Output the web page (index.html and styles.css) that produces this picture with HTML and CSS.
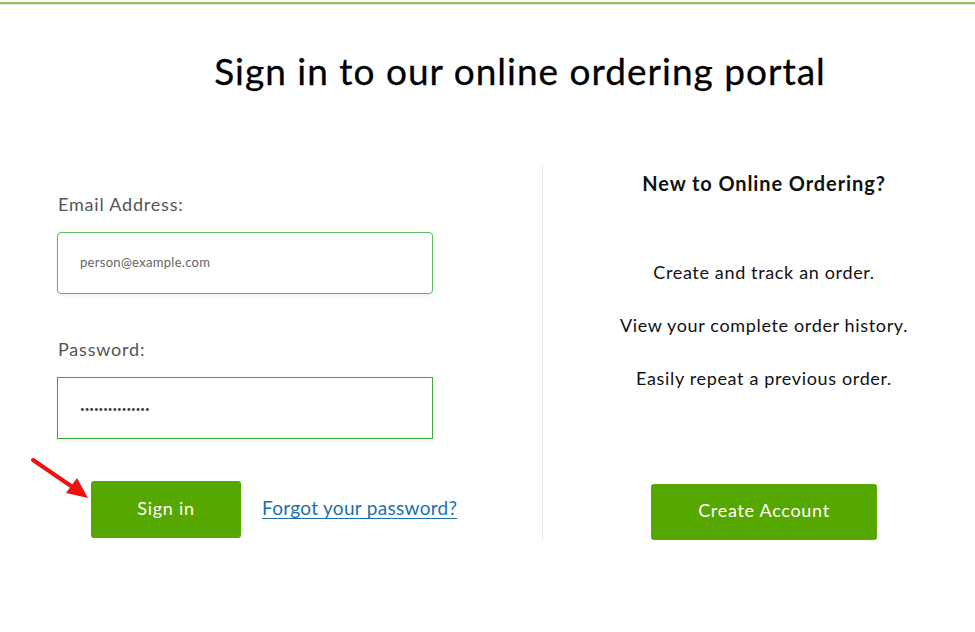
FILE: index.html
```html
<!DOCTYPE html>
<html lang="en">
<head>
<meta charset="utf-8">
<title>Sign in</title>
<link rel="stylesheet" href="styles.css">
</head>
<body>
<div class="topbar"></div>
<h1 class="title">Sign in to our online ordering portal</h1>
<main class="panels">
  <section class="left">
    <label class="label first" for="email">Email Address:</label>
    <input class="field email" id="email" type="text" placeholder="person@example.com">
    <label class="label second" for="pw">Password:</label>
    <input class="field pw" id="pw" type="password" value="123456789012345">
    <div class="actions">
      <button class="btn signin">Sign in</button>
      <a class="forgot" href="#">Forgot your password?</a>
      <svg class="arrow" width="70" height="50" viewBox="0 0 70 50">
        <line x1="5" y1="7" x2="46" y2="35" stroke="#f01010" stroke-width="4" stroke-linecap="round"/>
        <polygon points="60,45 38,40 49,25" fill="#f01010"/>
      </svg>
    </div>
  </section>
  <section class="right">
    <h2 class="newhead">New to Online Ordering?</h2>
    <p class="point p1">Create and track an order.</p>
    <p class="point">View your complete order history.</p>
    <p class="point">Easily repeat a previous order.</p>
    <button class="btn create">Create Account</button>
  </section>
</main>
</body>
</html>
```
FILE: styles.css
```css
html, body {
  margin: 0;
  padding: 0;
  background: #fff;
}
body {
  font-family: Lato, "Open Sans", Arial, sans-serif;
  color: #111;
}
.topbar {
  margin-top: 2px;
  height: 2px;
  background: #8cc25a;
  border-bottom: 1px solid #dfe6d8;
}
.title {
  margin: 0;
  padding: 43px 0 0 65px;
  text-align: center;
  font-size: 37px;
  line-height: 45px;
  font-weight: 400;
  letter-spacing: 1px;
  color: #000;
  -webkit-text-stroke: 0.3px #000;
}
.panels {
  display: flex;
  margin-top: 73px;
}
.left {
  width: 485px;
  padding-left: 57px;
  border-right: 1px solid #e6e6e6;
  display: flex;
  flex-direction: column;
  align-items: flex-start;
  padding-bottom: 2px;
}
.label {
  font-size: 18px;
  line-height: 22px;
  letter-spacing: 0.8px;
  color: #555;
  margin-left: 1px;
}
.label.first { margin-top: 27px; }
.label.second { margin-top: 44px; }
.field {
  box-sizing: border-box;
  width: 376px;
  height: 62px;
  margin: 17px 0 0 0;
  padding: 0 0 0 22px;
  font-family: inherit;
  font-size: 13px;
  letter-spacing: 0.3px;
  color: #555;
  background: #fff;
  outline: none;
  box-shadow: 0 2px 3px rgba(0,0,0,0.06);
}
.field.email {
  border: 1px solid #5fb860;
  border-radius: 4px;
  padding-bottom: 2px;
}
.field.email::placeholder { color: #666; }
.field.pw {
  border: 1px solid #3aa83a;
  border-radius: 0;
  font-size: 8px;
  letter-spacing: 0;
  color: #444;
  padding-top: 2px;
}
.actions {
  position: relative;
  margin-top: 42px;
  margin-left: 34px;
  display: flex;
  align-items: center;
  gap: 21px;
}
.btn {
  border: none;
  border-radius: 3px;
  background: #56a700;
  color: #fff;
  font-family: inherit;
  font-size: 18px;
  letter-spacing: 0.7px;
  padding: 0 0 4px 0;
  cursor: pointer;
}
.signin {
  width: 150px;
  height: 57px;
}
.forgot {
  color: #1b6fae;
  font-size: 19px;
  letter-spacing: 0.3px;
  text-decoration: underline;
  text-underline-offset: 3px;
  margin-bottom: 4px;
}
.arrow {
  position: absolute;
  left: -63px;
  top: -28px;
}
.right {
  flex: 1;
  padding-left: 10px;
  display: flex;
  flex-direction: column;
  align-items: center;
}
.newhead {
  margin: 5px 0 0 0;
  font-size: 20px;
  line-height: 24px;
  font-weight: 700;
  letter-spacing: 0.9px;
  color: #111;
}
.point {
  margin: 31px 0 0 0;
  font-size: 18px;
  line-height: 22px;
  letter-spacing: 0.65px;
  color: #111;
}
.point.p1 { margin-top: 66px; }
.create {
  margin-top: 95px;
  width: 226px;
  height: 56px;
}
```
